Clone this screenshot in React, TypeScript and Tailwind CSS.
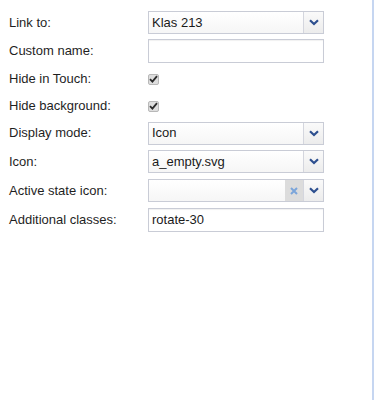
import React from "react";

const Chevron = () => (
  <svg width="10" height="7" viewBox="0 0 10 7">
    <path d="M1 1.2 L5 5 L9 1.2" fill="none" stroke="#2d4f8f" strokeWidth="2.2" />
  </svg>
);

const Select = ({ value, clear }: { value: string; clear?: boolean }) => (
  <div className="flex h-[23px] w-[176px] border border-[#c9ccd6] bg-gradient-to-b from-white to-[#f6f6f6]">
    <div className="flex flex-1 items-center pl-[3px] text-[13px] text-[#1a1a1a]">{value}</div>
    {clear && (
      <div className="flex w-[18px] items-center justify-center bg-[#dcdcdc]">
        <svg width="8" height="8" viewBox="0 0 8 8">
          <path d="M1 1 L7 7 M7 1 L1 7" stroke="#7ba5da" strokeWidth="2" />
        </svg>
      </div>
    )}
    <div className="flex w-[20px] items-center justify-center border-l border-[#d4d6de] bg-gradient-to-b from-[#fafafa] to-[#ececec]">
      <Chevron />
    </div>
  </div>
);

const Input = ({ value }: { value?: string }) => (
  <div className="flex h-[24px] w-[176px] items-center border border-[#c9ccd6] bg-white pl-[3px] text-[13px] text-[#1a1a1a] shadow-[inset_0_1px_1px_rgba(0,0,0,0.06)]">
    {value}
  </div>
);

const Check = () => (
  <div className="flex h-[11px] w-[11px] items-center justify-center rounded-[2px] border border-[#b8b8b8] bg-[#dedede]">
    <svg width="9" height="8" viewBox="0 0 9 8">
      <path d="M1 4.2 L3.4 6.6 L8 1.2" fill="none" stroke="#2b2b2b" strokeWidth="1.8" />
    </svg>
  </div>
);

const Row = ({ label, h, children }: { label: string; h: string; children: React.ReactNode }) => (
  <div className={`flex items-center ${h}`}>
    <div className="w-[148px] shrink-0 pl-[9px] text-[13px] text-[#1f1f1f]">{label}</div>
    {children}
  </div>
);

export default function App() {
  return (
    <div
      className="h-[400px] w-[374px] border-r-2 border-[#c6d6f1] bg-white"
      style={{ fontFamily: "Tahoma, 'Liberation Sans', Arial, sans-serif" }}
    >
      <div className="pt-[8px]">
        <Row label="Link to:" h="h-[29px]">
          <Select value="Klas 213" />
        </Row>
        <Row label="Custom name:" h="h-[28px]">
          <Input />
        </Row>
        <Row label="Hide in Touch:" h="h-[28px]">
          <Check />
        </Row>
        <Row label="Hide background:" h="h-[26px]">
          <Check />
        </Row>
        <Row label="Display mode:" h="h-[28px]">
          <Select value="Icon" />
        </Row>
        <Row label="Icon:" h="h-[29px]">
          <Select value="a_empty.svg" />
        </Row>
        <Row label="Active state icon:" h="h-[29px]">
          <Select value="" clear />
        </Row>
        <Row label="Additional classes:" h="h-[29px]">
          <Input value="rotate-30" />
        </Row>
      </div>
    </div>
  );
}
